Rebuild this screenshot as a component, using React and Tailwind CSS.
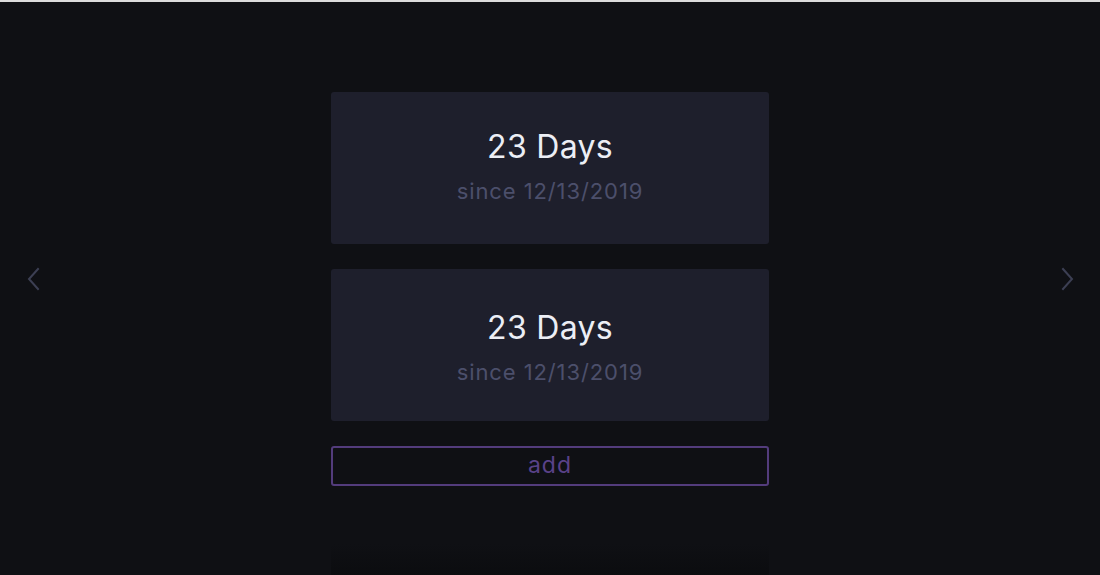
import React from 'react';

const font = { fontFamily: 'Inter, "Open Sans", sans-serif' };

function Chevron({ dir }) {
  return (
    <svg width="14" height="24" viewBox="0 0 14 24" fill="none" stroke="#3c3f53" strokeWidth="2" strokeLinecap="square">
      {dir === 'left' ? <path d="M12 2 L3 12 L12 22" /> : <path d="M2 2 L11 12 L2 22" />}
    </svg>
  );
}

function Counter({ days, since, pad = 'pb-[4px]' }) {
  return (
    <div className={'h-[152px] rounded-[3px] bg-[#1e1f2c] flex flex-col items-center justify-center ' + pad}>
      <div className="text-[32px] leading-[40px] text-[#eceef5] tracking-[0.3px]">{days} Days</div>
      <div className="mt-[10px] text-[22px] leading-[28px] text-[#4c4f6b] tracking-[0.9px]">since {since}</div>
    </div>
  );
}

export default function App() {
  return (
    <div className="h-[575px] overflow-hidden bg-[#0f1014] border-t-2 border-[#dcdcdc]" style={font}>
      <div className="grid grid-cols-[1fr_438px_1fr] h-full">
        <button className="self-start justify-self-start mt-[264px] ml-[26px] h-[26px] w-[16px]">
          <Chevron dir="left" />
        </button>

        <div className="pt-[90px] flex flex-col">
          <Counter days={23} since="12/13/2019" />
          <div className="h-[25px]" />
          <Counter days={23} since="12/13/2019" pad="pt-[4px]" />
          <button className="mt-[25px] h-[40px] rounded-[3px] border-2 border-[#533c7c] text-[23px] tracking-[1px] text-[#5a4289] leading-none flex items-center justify-center pb-[2px]">
            add
          </button>
          <div className="mt-[58px] h-[32px] bg-gradient-to-b from-[#0f1014] to-[#0b0c0f]" />
        </div>

        <button className="self-start justify-self-end mt-[264px] mr-[23px] h-[26px] w-[16px]">
          <Chevron dir="right" />
        </button>
      </div>
    </div>
  );
}
